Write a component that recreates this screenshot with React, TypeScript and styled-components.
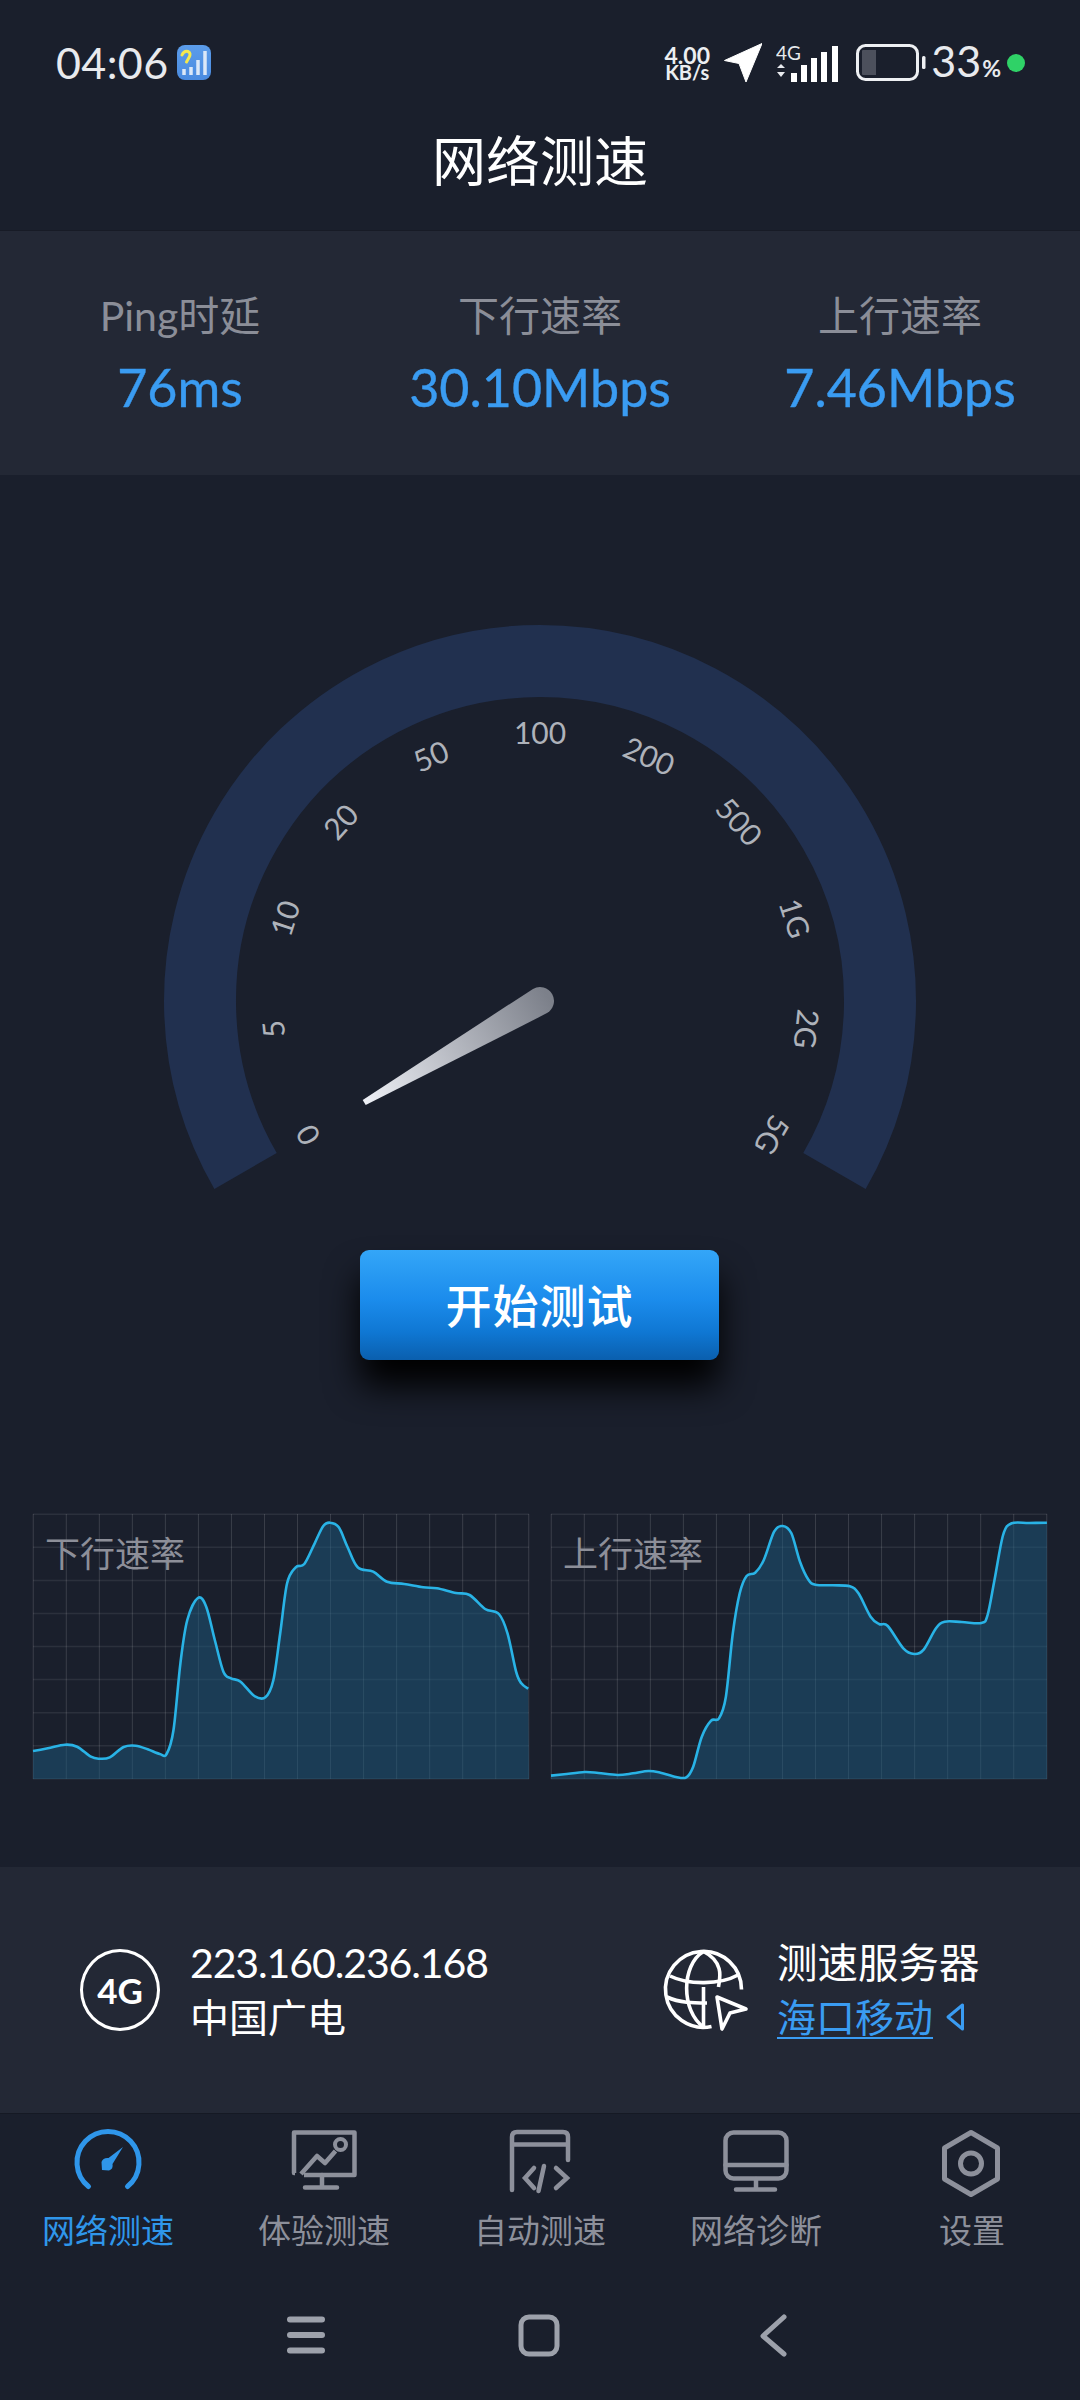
import React from "react";
import styled, { createGlobalStyle } from "styled-components";

const FONT = `Lato, "Noto Sans CJK SC", sans-serif`;

const Global = createGlobalStyle`
  html, body { margin: 0; padding: 0; background: #1a1f2c; }
  * { box-sizing: border-box; }
`;

const Page = styled.div`
  width: 1080px;
  height: 2400px;
  overflow: hidden;
  background: #1a1f2c;
  font-family: ${FONT};
  display: flex;
  flex-direction: column;
`;

/* ---------- status bar ---------- */
const StatusBar = styled.div`
  height: 82px;
  padding: 44px 0 0 56px;
  display: flex;
  align-items: center;
  color: #e8eaee;
`;
const Time = styled.div`
  font-size: 43px;
  line-height: 40px;
  letter-spacing: 0.4px;
`;
const StatusLeftIcon = styled.svg`
  width: 36px;
  height: 36px;
  margin-left: 7px;
`;
const StatusRight = styled.div`
  margin-left: auto;
  padding-right: 55px;
  display: flex;
  align-items: center;
`;
const Speed = styled.div`
  width: 50px;
  margin-left: -2px;
  display: flex;
  flex-direction: column;
  align-items: center;
  font-weight: 700;
  font-size: 23px;
  line-height: 18px;
  color: #eceef1;
`;
const SpeedUnit = styled.span`
  font-size: 20px;
  line-height: 17px;
`;
const StatusGlyph = styled.svg<{ $left: number }>`
  display: block;
  margin-left: ${(p) => p.$left}px;
`;
const Percent = styled.div`
  margin-left: 5px;
  padding-top: 2px;
  font-size: 43px;
  line-height: 40px;
  color: #e8eaee;
`;
const PercentSign = styled.span`
  font-size: 23px;
  font-weight: 700;
  margin-left: 1px;
`;
const GreenDot = styled.span`
  width: 18px;
  height: 18px;
  border-radius: 50%;
  background: #2fd267;
  margin-left: 6px;
`;

/* ---------- title ---------- */
const TitleBar = styled.h1`
  margin: 0;
  height: 149px;
  padding-top: 45px;
  text-align: center;
  color: #fff;
  font-size: 54px;
  line-height: 70px;
  font-weight: 400;
  border-bottom: 1px solid #171b26;
`;

/* ---------- stats ---------- */
const Stats = styled.section`
  height: 244px;
  background: #232835;
  padding-top: 55px;
  display: grid;
  grid-template-columns: repeat(3, 360px);
`;
const Stat = styled.div`
  display: flex;
  flex-direction: column;
  align-items: center;
`;
const StatLabel = styled.div`
  font-size: 41px;
  line-height: 60px;
  color: #8b8e98;
`;
const StatValue = styled.div`
  margin-top: 6px;
  font-size: 52px;
  line-height: 70px;
  color: #3a9cf2;
  -webkit-text-stroke: 0.4px #3a9cf2;
`;

/* ---------- gauge ---------- */
const GaugeWrap = styled.div`
  margin-top: 125px;
  height: 600px;
  display: flex;
  justify-content: center;
`;
const GaugeSvg = styled.svg`
  display: block;
  width: 800px;
  height: 600px;
`;
const Tick = styled.text`
  font-family: ${FONT};
  font-size: 30px;
  font-weight: 400;
  fill: #aeb2ba;
`;

const ButtonRow = styled.div`
  margin-top: 50px;
  display: flex;
  justify-content: center;
  padding-right: 1px;
`;
const StartButton = styled.button`
  width: 359px;
  height: 110px;
  border: 0;
  border-radius: 9px;
  padding: 0 0 4px;
  font-family: ${FONT};
  font-size: 46px;
  font-weight: 500;
  letter-spacing: 1px;
  color: #fff;
  background: linear-gradient(#34a6f8 0%, #1b8cec 45%, #0f77d3 75%, #0a5fae 100%);
  box-shadow: 0 26px 34px 0 rgba(0, 0, 0, 1);
`;

/* ---------- charts ---------- */
const Charts = styled.div`
  margin-top: 154px;
  padding-left: 33px;
  display: flex;
  gap: 22px;
`;
const ChartBox = styled.div`
  position: relative;
  width: 496px;
  height: 265px;
`;
const ChartSvg = styled.svg`
  display: block;
  width: 496px;
  height: 265px;
  overflow: visible;
`;
const ChartLabel = styled.div`
  position: absolute;
  left: 12px;
  top: 16px;
  font-size: 35px;
  line-height: 46px;
  color: #8d8f99;
`;

/* ---------- info panel ---------- */
const Info = styled.section`
  margin-top: 88px;
  height: 246px;
  background: #232835;
  display: flex;
  align-items: center;
  padding-left: 80px;
`;
const InfoGroup = styled.div<{ $width: number; $gap: number }>`
  width: ${(p) => p.$width}px;
  display: flex;
  align-items: center;
  gap: ${(p) => p.$gap}px;
`;
const InfoText = styled.div`
  display: flex;
  flex-direction: column;
  color: #fff;
`;
const InfoLine = styled.div<{ $size: number; $spacing?: number }>`
  font-size: ${(p) => p.$size}px;
  line-height: 54px;
  letter-spacing: ${(p) => p.$spacing ?? 0}px;
`;
const ServerRow = styled.div`
  display: flex;
  align-items: center;
  gap: 12px;
  color: #3a9cf2;
  font-size: 39px;
  line-height: 54px;
`;
const ServerLink = styled.span`
  text-decoration: underline;
  text-decoration-thickness: 2px;
  text-underline-offset: 5px;
`;
const FourG = styled.div`
  width: 80px;
  height: 82px;
  border: 3.5px solid #fff;
  border-radius: 50%;
  display: flex;
  align-items: center;
  justify-content: center;
  color: #fff;
  font-size: 35px;
  font-weight: 700;
`;
const IconSvg = styled.svg`
  display: block;
  flex: none;
`;

/* ---------- bottom nav ---------- */
const Nav = styled.nav`
  flex: 1;
  border-top: 1px solid #151924;
  padding-top: 11px;
  display: grid;
  grid-template-columns: repeat(5, 216px);
  align-content: start;
`;
const NavItem = styled.div<{ $active?: boolean }>`
  display: flex;
  flex-direction: column;
  align-items: center;
  color: ${(p) => (p.$active ? "#2f96ea" : "#8d909b")};
`;
const NavLabel = styled.div`
  margin-top: 10px;
  font-size: 33px;
  line-height: 42px;
`;
const SysNav = styled.div`
  position: absolute;
  top: 2305px;
  left: 0;
  width: 1080px;
  display: flex;
  justify-content: center;
  gap: 173px;
  padding-right: 2px;
`;
const Root = styled.div`
  position: relative;
`;

/* ---------- data ---------- */
const CX = 400;
const CY = 401;
const polar = (r: number, deg: number) => {
  const a = ((deg - 90) * Math.PI) / 180;
  return [CX + r * Math.cos(a), CY + r * Math.sin(a)];
};
const arcStart = polar(340, -120);
const arcEnd = polar(340, 120);
const ARC = `M${arcStart[0]} ${arcStart[1]} A340 340 0 1 1 ${arcEnd[0]} ${arcEnd[1]}`;
const TICKS = ["0", "5", "10", "20", "50", "100", "200", "500", "1G", "2G", "5G"];

const DOWN: [number, number][] = [
  [97,783],[140,775],[190,764],[225,770],[265,800],[289,806],[320,802],[360,771],[395,767],[430,778],[465,792],[485,792],[505,720],[525,520],[545,390],[576,324],[600,350],[625,450],[650,545],[672,565],[700,575],[740,618],[772,622],[795,570],[815,430],[835,280],[860,232],[885,222],[915,160],[940,108],[960,98],[985,112],[1010,170],[1040,232],[1085,245],[1125,275],[1175,282],[1230,292],[1270,295],[1325,309],[1365,315],[1410,357],[1450,372],[1475,430],[1500,545],[1515,580],[1535,596],
];
const UP: [number, number][] = [
  [32,857],[70,853],[130,846],[170,849],[225,855],[270,850],[315,843],[350,848],[395,861],[425,862],[445,830],[470,740],[497,692],[520,685],[540,620],[560,430],[580,310],[600,258],[625,248],[650,210],[680,125],[705,108],[730,130],[755,215],[780,270],[800,284],[850,286],[900,289],[925,310],[960,380],[985,402],[1010,408],[1055,475],[1087,492],[1115,478],[1150,415],[1175,395],[1225,396],[1282,399],[1300,375],[1320,270],[1345,135],[1370,100],[1420,99],[1472,98],
];

const smooth = (pts: [number, number][]) => {
  let d = `M${pts[0][0]} ${pts[0][1]}`;
  for (let i = 0; i < pts.length - 1; i++) {
    const p0 = pts[Math.max(i - 1, 0)];
    const p1 = pts[i];
    const p2 = pts[i + 1];
    const p3 = pts[Math.min(i + 2, pts.length - 1)];
    const c1x = p1[0] + (p2[0] - p0[0]) / 6;
    const c1y = p1[1] + (p2[1] - p0[1]) / 6;
    const c2x = p2[0] - (p3[0] - p1[0]) / 6;
    const c2y = p2[1] - (p3[1] - p1[1]) / 6;
    d += ` C${c1x.toFixed(1)} ${c1y.toFixed(1)} ${c2x.toFixed(1)} ${c2y.toFixed(1)} ${p2[0].toFixed(1)} ${p2[1].toFixed(1)}`;
  }
  return d;
};

const Chart: React.FC<{ label: string; data: [number, number][]; originX: number }> = ({ label, data, originX }) => {
  const pts = data.map(([x, y]) => [(x - originX) / 2.904, (y - 72) / 3] as [number, number]);
  const line = smooth(pts);
  const v = Array.from({ length: 16 }, (_, i) => i * (495.5 / 15));
  const h = Array.from({ length: 9 }, (_, i) => i * (264.5 / 8));
  return (
    <ChartBox>
      <ChartSvg viewBox="0 0 496 265">
        {v.map((x) => (
          <line key={`v${x}`} x1={x + 0.25} x2={x + 0.25} y1={0} y2={265} stroke="#ffffff" strokeOpacity={0.14} strokeWidth={1} />
        ))}
        {h.map((y) => (
          <line key={`h${y}`} x1={0} x2={496} y1={y + 0.25} y2={y + 0.25} stroke="#ffffff" strokeOpacity={0.08} strokeWidth={1.5} />
        ))}
        <path d={`${line} L496 265 L0 265 Z`} fill="#1c5a7e" fillOpacity={0.5} />
        <path d={line} fill="none" stroke="#29b3e6" strokeWidth={2.6} strokeLinejoin="round" />
      </ChartSvg>
      <ChartLabel>{label}</ChartLabel>
    </ChartBox>
  );
};

const NAVS = [
  {
    label: "网络测速",
    active: true,
    icon: (
      <>
        <path d="M15.5 61.5 A31 31 0 1 1 54.5 61.5" fill="none" stroke="currentColor" strokeWidth="5" strokeLinecap="round" />
        <path d="M50 22 L39.5 39 Q40.5 44 36 45.5 L29 45 L28.5 37 Q30 32.5 35.5 33 Z" fill="currentColor" />
      </>
    ),
  },
  {
    label: "体验测速",
    icon: (
      <>
        <path d="M6 48 H5 V7.5 H65.5 V50 H15" fill="none" stroke="currentColor" strokeWidth="4.5" strokeLinejoin="round" />
        <path d="M12 49 L28 31 L36 38 L46.5 26" fill="none" stroke="currentColor" strokeWidth="4.5" strokeLinejoin="round" />
        <circle cx="51.5" cy="19.5" r="5.5" fill="none" stroke="currentColor" strokeWidth="4" />
        <path d="M33 50 V62 M16 62.5 H48" fill="none" stroke="currentColor" strokeWidth="4.5" strokeLinecap="round" />
      </>
    ),
  },
  {
    label: "自动测速",
    icon: (
      <>
        <path d="M7 65 V12 Q7 7 12 7 H58 Q63 7 63 12 V35 M7 19.5 H63" fill="none" stroke="currentColor" strokeWidth="4.5" strokeLinecap="round" />
        <path d="M29 43 L20 53 L29 63 M51 43 L62 53 L51 63 M39 41 L33.5 66" fill="none" stroke="currentColor" strokeWidth="4.5" strokeLinecap="round" />
      </>
    ),
  },
  {
    label: "网络诊断",
    icon: (
      <>
        <rect x="4.5" y="7.5" width="61" height="46" rx="8" fill="none" stroke="currentColor" strokeWidth="4.5" />
        <path d="M4.5 40 H65.5 M35 54 V64 M15 64.5 H54" fill="none" stroke="currentColor" strokeWidth="4.5" strokeLinecap="round" />
      </>
    ),
  },
  {
    label: "设置",
    icon: (
      <>
        <path d="M34 7.5 L60.5 23 V54 L34 69.5 L7.5 54 V23 Z" fill="none" stroke="currentColor" strokeWidth="5" strokeLinejoin="round" />
        <circle cx="34" cy="38.5" r="10.5" fill="none" stroke="currentColor" strokeWidth="5" />
      </>
    ),
  },
];

export default function App() {
  return (
    <Root>
      <Global />
      <Page>
        <StatusBar>
          <Time>04:06</Time>
          <StatusLeftIcon viewBox="0 0 36 36">
            <defs>
              <linearGradient id="appBg" x1="0" y1="0" x2="0" y2="1">
                <stop offset="0" stopColor="#5b9cea" />
                <stop offset="1" stopColor="#4a8be0" />
              </linearGradient>
            </defs>
            <rect x="1" y="0" width="34" height="35" rx="8" fill="url(#appBg)" />
            <path d="M6 10 Q8 5.5 12 6.5 Q15.5 8 13 12.5 L10.5 17" fill="none" stroke="#f5e84d" strokeWidth="3" strokeLinecap="round" />
            <path d="M8 24v6M15 22v8M22 15v15M29 6v24" stroke="#dbe8f8" strokeWidth="3.5" />
          </StatusLeftIcon>
          <StatusRight>
            <Speed>
              <span>4.00</span>
              <SpeedUnit>KB/s</SpeedUnit>
            </Speed>
            <StatusGlyph $left={12} width="38" height="40" viewBox="0 0 38 40">
              <path d="M38 0.5 L0.5 17.5 L15 20.5 L22 39 Z" fill="#fff" stroke="#fff" strokeLinejoin="round" />
            </StatusGlyph>
            <StatusGlyph $left={14} width="66" height="44" viewBox="0 -2 66 44">
              <text x="0" y="17" fontSize="19" fill="#e8eaee" fontFamily="Lato, sans-serif">4G</text>
              <path d="M5 21 L9 25 H1 Z M5 34 L9 29 H1 Z" fill="#e8eaee" />
              <path d="M15 30h6v9h-6z M25 22h6v17h-6z M35 15h6v24h-6z M45 9h6v30h-6z M56 3h6v36h-6z" fill="#fff" />
            </StatusGlyph>
            <StatusGlyph $left={14} width="70" height="38" viewBox="0 0 70 38">
              <rect x="1.5" y="1.5" width="60" height="34" rx="8" fill="none" stroke="#eef0f3" strokeWidth="3" />
              <path d="M7 6 H20 V31 H7 Q6 31 6 30 V7 Q6 6 7 6 Z" fill="#4c505c" />
              <rect x="66" y="12" width="3.5" height="13" rx="1.5" fill="#eef0f3" />
            </StatusGlyph>
            <Percent>
              33<PercentSign>%</PercentSign>
            </Percent>
            <GreenDot />
          </StatusRight>
        </StatusBar>
        <TitleBar>网络测速</TitleBar>

        <Stats>
          <Stat>
            <StatLabel>Ping时延</StatLabel>
            <StatValue>76ms</StatValue>
          </Stat>
          <Stat>
            <StatLabel>下行速率</StatLabel>
            <StatValue>30.10Mbps</StatValue>
          </Stat>
          <Stat>
            <StatLabel>上行速率</StatLabel>
            <StatValue>7.46Mbps</StatValue>
          </Stat>
        </Stats>

        <GaugeWrap>
          <GaugeSvg viewBox="0 0 800 600">
            <defs>
              <linearGradient id="needle" gradientUnits="userSpaceOnUse" x1="400" y1="198" x2="400" y2="410">
                <stop offset="0" stopColor="#eef0f6" />
                <stop offset="1" stopColor="#7c808a" />
              </linearGradient>
            </defs>
            <path d={ARC} fill="none" stroke="#21304f" strokeWidth="72" />
            {TICKS.map((t, i) => {
              const deg = -120 + 24 * i;
              const [x, y] = polar(269, deg);
              return (
                <Tick key={t} textAnchor="middle" dominantBaseline="central" transform={`translate(${x} ${y}) rotate(${deg})`}>
                  {t}
                </Tick>
              );
            })}
            <path
              d="M397 198 L403 198 L414 401 A14 14 0 0 1 386 401 Z"
              fill="url(#needle)"
              transform={`rotate(-120 ${CX} ${CY})`}
            />
          </GaugeSvg>
        </GaugeWrap>

        <ButtonRow>
          <StartButton>开始测试</StartButton>
        </ButtonRow>

        <Charts>
          <Chart label="下行速率" data={DOWN} originX={97} />
          <Chart label="上行速率" data={UP} originX={32} />
        </Charts>

        <Info>
          <InfoGroup $width={580} $gap={30}>
            <FourG>4G</FourG>
            <InfoText>
              <InfoLine $size={41} $spacing={-1.1}>223.160.236.168</InfoLine>
              <InfoLine $size={39}>中国广电</InfoLine>
            </InfoText>
          </InfoGroup>
          <InfoGroup $width={340} $gap={27}>
            <IconSvg width="90" height="90" viewBox="0 0 90 90" fill="none" stroke="#fff" strokeWidth="3.6">
              <path d="M81.5 44.5 A38 38 0 1 0 51.5 81.5" />
              <path d="M43.5 6.5 C66 18 59 36 58.5 42" />
              <path d="M43.5 6.5 C21 20 21 66 43.5 82" />
              <path d="M10 31 C28 40 60 40 78 30" />
              <path d="M7 52 C20 58 33 58 47 58" />
              <path d="M43.5 42 V82" />
              <path d="M57 52 L86 64 L70 68 L62 84 Z" strokeLinejoin="round" />
            </IconSvg>
            <InfoText>
              <InfoLine $size={40.5}>测速服务器</InfoLine>
              <ServerRow>
                <ServerLink>海口移动</ServerLink>
                <svg width="20" height="30" viewBox="0 0 20 30" fill="none" stroke="currentColor" strokeWidth="3">
                  <path d="M17.5 3 V27 L3 15 Z" strokeLinejoin="round" />
                </svg>
              </ServerRow>
            </InfoText>
          </InfoGroup>
        </Info>

        <Nav>
          {NAVS.map((n) => (
            <NavItem key={n.label} $active={n.active}>
              <IconSvg width="70" height="74" viewBox="0 0 70 74">
                {n.icon}
              </IconSvg>
              <NavLabel>{n.label}</NavLabel>
            </NavItem>
          ))}
        </Nav>
      </Page>
      <SysNav>
        <IconSvg width="60" height="60" viewBox="0 0 60 60" stroke="#9da1ab" strokeWidth="6" strokeLinecap="round">
          <path d="M14 14.5 H46 M14 30 H46 M14 45.5 H46" />
        </IconSvg>
        <IconSvg width="60" height="60" viewBox="0 0 60 60" fill="none" stroke="#9da1ab" strokeWidth="5">
          <rect x="12" y="12" width="36" height="37" rx="8" />
        </IconSvg>
        <IconSvg width="60" height="60" viewBox="0 0 60 60" fill="none" stroke="#9da1ab" strokeWidth="5" strokeLinecap="round" strokeLinejoin="round">
          <path d="M42 12 L21 31 L42 49" />
        </IconSvg>
      </SysNav>
    </Root>
  );
}
